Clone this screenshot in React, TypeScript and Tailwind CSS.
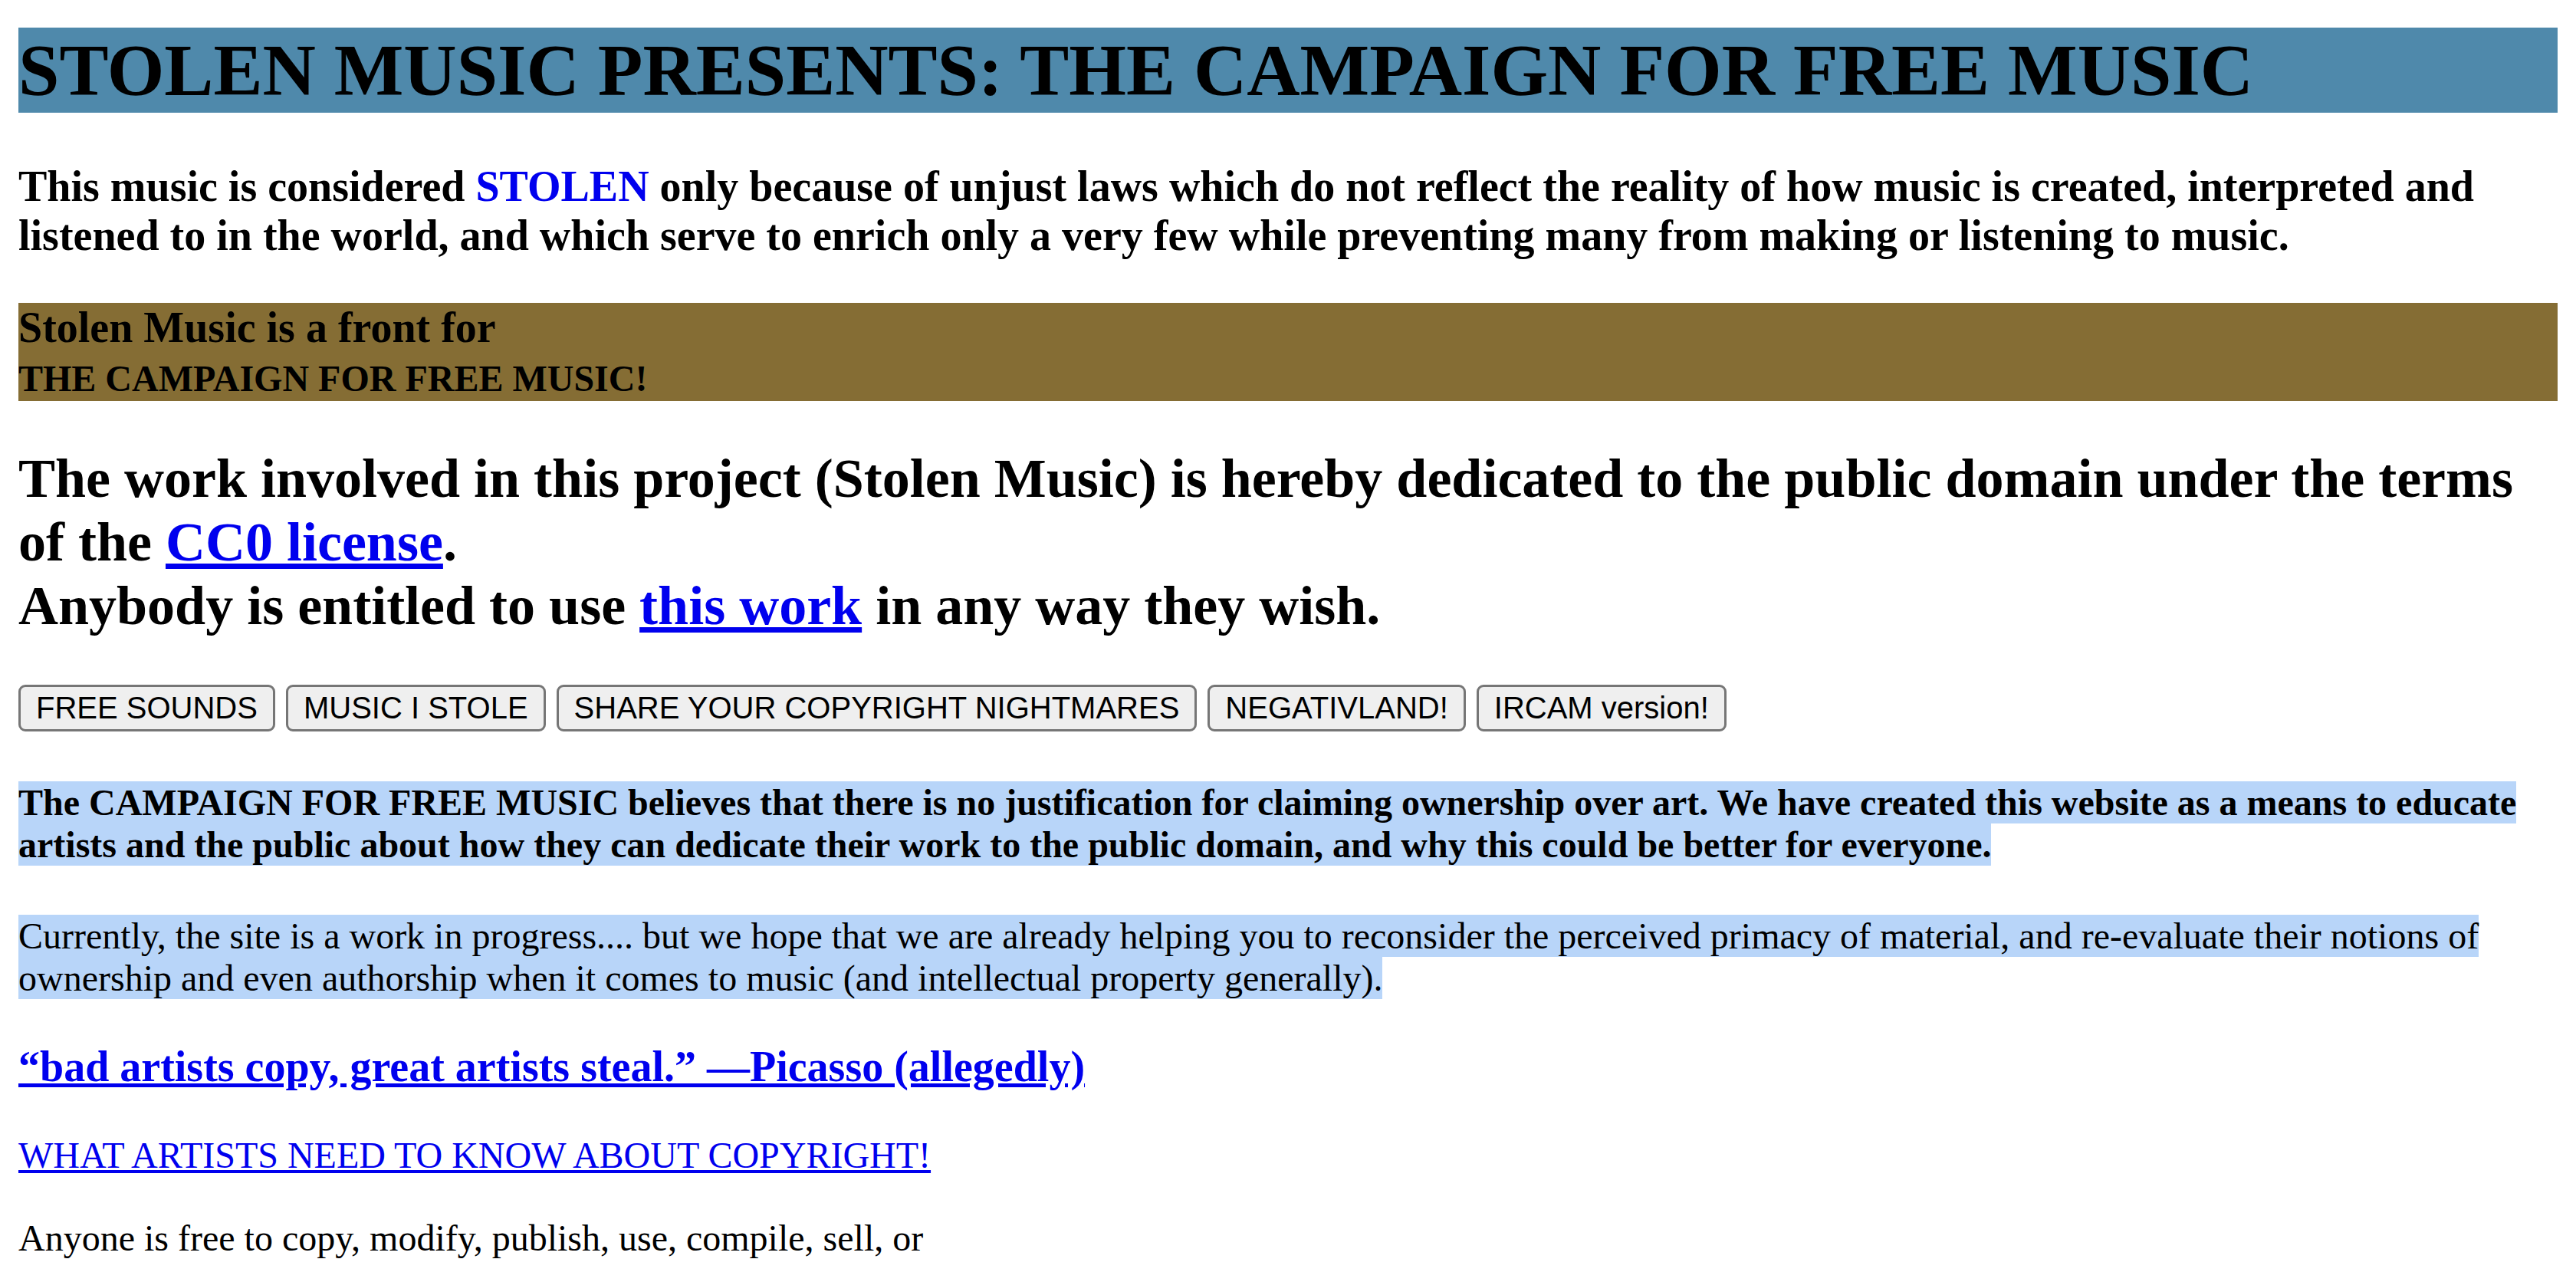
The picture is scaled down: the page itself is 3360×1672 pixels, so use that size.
import React from "react";

const buttons = [
  "FREE SOUNDS",
  "MUSIC I STOLE",
  "SHARE YOUR COPYRIGHT NIGHTMARES",
  "NEGATIVLAND!",
  "IRCAM version!",
];

export default function App() {
  return (
    <div className="bg-white text-black px-[24px] pt-[36px] pb-[48px] leading-[normal] [font-family:'Liberation_Serif','Times_New_Roman',serif]">
      <h1 className="m-0 mb-[64px] bg-[#4f89ab] text-[96px] font-bold">
        STOLEN MUSIC PRESENTS: THE CAMPAIGN FOR FREE MUSIC
      </h1>

      <h3 className="m-0 mb-[56px] text-[56px] font-bold">
        This music is considered <span className="text-[#0000ee]">STOLEN</span> only because of unjust laws which do
        not reflect the reality of how music is created, interpreted and listened to in the world, and which serve to
        enrich only a very few while preventing many from making or listening to music.
      </h3>

      <h3 className="m-0 mb-[60px] bg-[#856d34] text-[56px] font-bold">
        Stolen Music is a front for
        <br />
        <span className="text-[48px]">THE CAMPAIGN FOR FREE MUSIC!</span>
      </h3>

      <h2 className="m-0 mb-[60px] text-[72px] font-bold">
        The work involved in this project (Stolen Music) is hereby dedicated to the public domain under the terms of
        the{" "}
        <a href="#" className="text-[#0000ee] underline">
          CC0 license
        </a>
        .
        <br />
        Anybody is entitled to use{" "}
        <a href="#" className="text-[#0000ee] underline">
          this work
        </a>{" "}
        in any way they wish.
      </h2>

      <div className="flex flex-wrap gap-[14px] pt-[1px] mb-[65px]">
        {buttons.map((b) => (
          <button
            key={b}
            className="h-[61px] px-[20px] border-[3px] border-solid border-[#767676] rounded-[9px] bg-[#efefef] text-black text-[40px] leading-[normal] [font-family:'Liberation_Sans',Arial,sans-serif]"
          >
            {b}
          </button>
        ))}
      </div>

      <h4 className="m-0 mb-[64px] text-[48px] font-bold">
        <span className="bg-[#b8d5f9] py-[1px] box-decoration-clone">
          The CAMPAIGN FOR FREE MUSIC believes that there is no justification for claiming ownership over art. We have
          created this website as a means to educate artists and the public about how they can dedicate their work to
          the public domain, and why this could be better for everyone.
        </span>
      </h4>

      <p className="m-0 mb-[56px] text-[48px]">
        <span className="bg-[#b8d5f9] py-[1px] box-decoration-clone">
          Currently, the site is a work in progress.... but we hope that we are already helping you to reconsider the
          perceived primacy of material, and re-evaluate their notions of ownership and even authorship when it comes to
          music (and intellectual property generally).
        </span>
      </p>

      <h3 className="m-0 mb-[56px] text-[56px] font-bold">
        <a href="#" className="text-[#0000ee] underline">
          “bad artists copy, great artists steal.” —Picasso (allegedly)
        </a>
      </h3>

      <p className="m-0 mb-[53px] text-[48px]">
        <a href="#" className="text-[#0000ee] underline">
          WHAT ARTISTS NEED TO KNOW ABOUT COPYRIGHT!
        </a>
      </p>

      <p className="m-0 text-[48px]">Anyone is free to copy, modify, publish, use, compile, sell, or</p>
    </div>
  );
}
